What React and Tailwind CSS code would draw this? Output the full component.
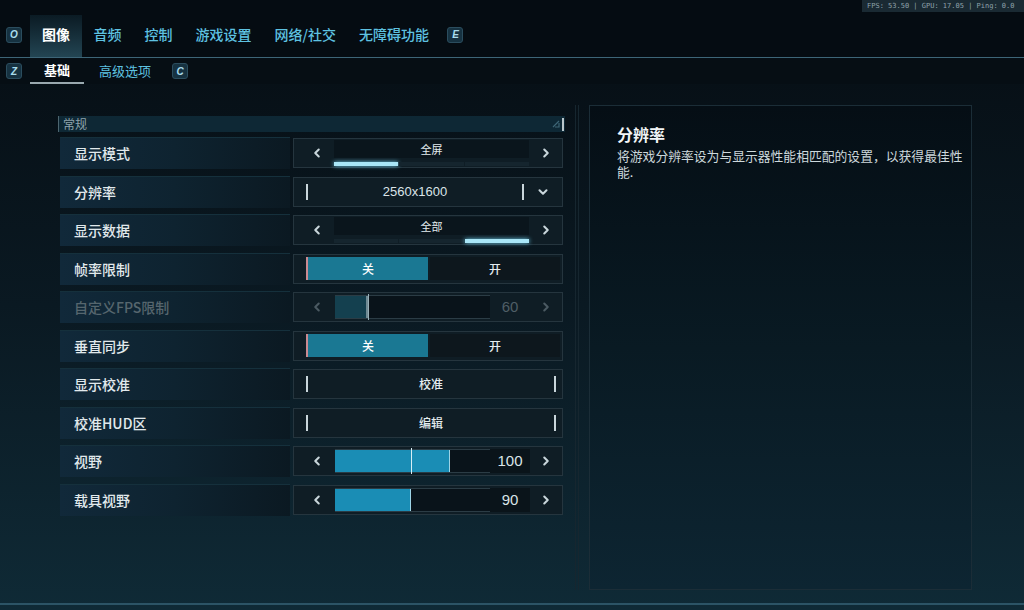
import { ChevronLeft, ChevronRight, ChevronDown } from 'lucide-react';

const tabs = ['图像', '音频', '控制', '游戏设置', '网络/社交', '无障碍功能'];

const rows = [
  { label: '显示模式', type: 'select', value: '全屏', seg: 0 },
  { label: '分辨率', type: 'dropdown', value: '2560x1600' },
  { label: '显示数据', type: 'select', value: '全部', seg: 2 },
  { label: '帧率限制', type: 'toggle' },
  { label: '自定义FPS限制', type: 'slider', value: '60', fill: 33, disabled: true },
  { label: '垂直同步', type: 'toggle' },
  { label: '显示校准', type: 'button', value: '校准' },
  { label: '校准HUD区', type: 'button', value: '编辑' },
  { label: '视野', type: 'slider', value: '100', fill: 115, marker: 76 },
  { label: '载具视野', type: 'slider', value: '90', fill: 76 },
];

function Key({ k }) {
  return (
    <div className="w-4 h-4 rounded-[3px] bg-[#163241] border border-[#2b4d5e] flex items-center justify-center text-[10px] font-bold italic text-[#a9dcec] font-['Liberation_Sans',sans-serif]">
      {k}
    </div>
  );
}

function Arrow({ dir, dim }) {
  const cls = dim ? 'text-[#4b5a62]' : 'text-[#c9d6db]';
  if (dir === 'l') return <ChevronLeft size={14} strokeWidth={3.5} className={cls} />;
  if (dir === 'd') return <ChevronDown size={14} strokeWidth={3.5} className={cls} />;
  return <ChevronRight size={14} strokeWidth={3.5} className={cls} />;
}

function Control({ row }) {
  const box = 'w-[270px] h-[30px] bg-[#0f1d25] border border-[#25353e] flex items-center';
  if (row.type === 'select') {
    return (
      <div className={box}>
        <div className="w-[40px] flex justify-center pl-[6px]"><Arrow dir="l" /></div>
        <div className="w-[195px] h-full flex flex-col pt-[1px]">
          <div className="h-[18px] bg-[#0a151c] flex items-center justify-center text-[11px] text-[#e4ecef]">{row.value}</div>
          <div className="flex gap-[1px] mt-[4px] h-[4px]">
            {[0, 1, 2].map((i) => (
              <div
                key={i}
                className={i === row.seg ? 'flex-1 bg-[#a9e6f7] shadow-[0_0_4px_#6fd0ee]' : 'flex-1 bg-[#15252e]'}
              />
            ))}
          </div>
        </div>
        <div className="flex-1 flex justify-center"><Arrow dir="r" /></div>
      </div>
    );
  }
  if (row.type === 'dropdown') {
    return (
      <div className={box}>
        <div className="ml-[12px] w-[2px] h-[16px] bg-[#c9d6db]" />
        <div className="flex-1 text-center text-[13px] text-[#dbe4e8] font-['Liberation_Sans','Noto_Sans_CJK_SC',sans-serif]">{row.value}</div>
        <div className="w-[2px] h-[16px] bg-[#c9d6db]" />
        <div className="w-[38px] flex justify-center"><Arrow dir="d" /></div>
      </div>
    );
  }
  if (row.type === 'toggle') {
    return (
      <div className={box + ' pl-[12px] pr-[2px]'}>
        <div className="w-[122px] h-[23px] bg-[#1a7893] border-l-2 border-[#c98a92] flex items-center justify-center text-[12px] font-medium text-white">关</div>
        <div className="flex-1 h-[23px] ml-[2px] bg-[#0d171d] flex items-center justify-center text-[12px] font-medium text-[#e4ecef]">开</div>
      </div>
    );
  }
  if (row.type === 'button') {
    return (
      <div className={box + ' bg-[#0b161d]'}>
        <div className="ml-[12px] w-[2px] h-[16px] bg-[#c9d6db]" />
        <div className="flex-1 text-center text-[12px] font-medium text-[#e4ecef]">{row.value}</div>
        <div className="mr-[6px] w-[2px] h-[16px] bg-[#c9d6db]" />
      </div>
    );
  }
  // slider
  const dim = row.disabled;
  return (
    <div className={box}>
      <div className="w-[41px] flex justify-center pl-[4px]"><Arrow dir="l" dim={dim} /></div>
      <div className="relative w-[155px] h-[24px] bg-[#09131a] border-y border-[#2b3c45]">
        <div
          className={dim ? 'h-full bg-[#14404f] border-r-2 border-[#6f8a94]' : 'h-full bg-[#1a8db5] border-r border-[#9ed4e6]'}
          style={{ width: row.fill }}
        />
        {row.marker && (
          <div className="absolute top-[-2px] bottom-[-2px] w-[1px] bg-[#d8eef5]" style={{ left: row.marker }} />
        )}
        {dim && <div className="absolute top-[-2px] bottom-[-2px] w-[1px] bg-[#9ab0b8]" style={{ left: row.fill }} />}
      </div>
      <div className={(dim ? 'bg-transparent text-[#4f5e66] ' : 'bg-[#0a141a] text-[#dbe4e8] ') + "w-[40px] h-[24px] flex items-center justify-center text-[15px] font-['Liberation_Sans',sans-serif]"}>
        {row.value}
      </div>
      <div className="flex-1 flex justify-center"><Arrow dir="r" dim={dim} /></div>
    </div>
  );
}

function Row({ row }) {
  return (
    <div className="h-[38.5px] flex items-center">
      <div className="w-[230px] h-[32px] ml-[2px] bg-gradient-to-r from-[#11293a] via-[#0e2330] to-[#0b1922] border-t border-[#15303c] flex items-center pl-[14px]">
        <span className={(row.disabled ? 'text-[#56666e]' : 'text-[#e1e9ec]') + ' text-[14px] font-medium'}>{row.label}</span>
      </div>
      <div className="ml-[3px]">
        <Control row={row} />
      </div>
    </div>
  );
}

export default function App() {
  return (
    <div className="w-[1024px] h-[610px] overflow-hidden relative bg-gradient-to-b from-[#060d13] via-[#0a1922] to-[#0f2a36] font-['Noto_Sans_CJK_SC','Noto_Sans',sans-serif]">
      <div className="absolute top-0 right-0 w-[162px] h-[12px] bg-[#1a2a33] text-[7px] leading-[12px] text-[#8fa2ab] pl-[5px] font-['DejaVu_Sans_Mono',monospace] whitespace-nowrap">
        FPS: 53.50 | GPU: 17.05 | Ping: 0.0
      </div>

      {/* top tabs */}
      <div className="h-[57px] bg-[#050c12] flex items-end pl-[6px]">
        <div className="h-[42px] flex items-stretch">
          <div className="flex items-center pr-[8px] pb-[3px]"><Key k="O" /></div>
          {tabs.map((t, i) => (
            <div
              key={t}
              className={
                i === 0
                  ? 'px-[12px] pb-[3px] flex items-center bg-gradient-to-b from-[#0b1b24] to-[#234553] text-white text-[14px] font-bold'
                  : 'px-[11.5px] pb-[3px] flex items-center text-[#5ec2e1] text-[14px] font-medium'
              }
            >
              {t}
            </div>
          ))}
          <div className="flex items-center pl-[7px] pb-[3px]"><Key k="E" /></div>
        </div>
      </div>
      <div className="h-[1px] bg-[#3d6577]" />

      {/* sub tabs */}
      <div className="h-[26px] bg-[#060e14] flex items-stretch pl-[6px]">
        <div className="flex items-center pr-[8px]"><Key k="Z" /></div>
        <div className="w-[54px] pb-[1px] flex items-center justify-center text-[13px] font-bold text-white border-b-2 border-[#9aa9af]">基础</div>
        <div className="w-[82px] pb-[1px] flex items-center justify-center text-[13px] text-[#5ec2e1]">高级选项</div>
        <div className="flex items-center pl-[6px]"><Key k="C" /></div>
      </div>

      {/* content */}
      <div className="flex pl-[58px] pt-[21px]">
        <div className="w-[507px] pt-[11px]">
          <div className="h-[16px] bg-[#0e2835] flex items-center justify-between border-l border-[#4d6670]">
            <span className="pl-[4px] text-[12px] text-[#8ea3ac]">常规</span>
            <div className="flex items-center gap-[2px] pr-[1px]">
              <svg width="8" height="8" viewBox="0 0 8 8"><path d="M1 7 L7 1 M3 7 H7 V3" stroke="#3e6676" strokeWidth="1.2" fill="none" /></svg>
              <div className="w-[2px] h-[13px] bg-[#b9c6cb]" />
            </div>
          </div>
          <div className="pt-[2px]">
            {rows.map((r) => (
              <Row key={r.label} row={r} />
            ))}
          </div>
        </div>

        <div className="ml-[10px] w-[4px] h-[485px] border-x border-[#16262f]" />

        <div className="ml-[10px] w-[383px] h-[485px] border border-[#1b2d37] bg-gradient-to-b from-[#050e15] via-[#091a23] to-[#0d2532] pl-[27px] pt-[17px]">
          <div className="text-[16px] leading-[22px] font-bold text-[#f1f5f7]">分辨率</div>
          <div className="text-[12.8px] leading-[17px] text-[#cdd8dc] mt-[2px] whitespace-nowrap">
            <div>将游戏分辨率设为与显示器性能相匹配的设置，以获得最佳性</div>
            <div className="-mt-[1px]">能.</div>
          </div>
        </div>
      </div>

      <div className="absolute left-0 right-0 top-[603px] h-[2px] bg-[#2c5466]" />
    </div>
  );
}
